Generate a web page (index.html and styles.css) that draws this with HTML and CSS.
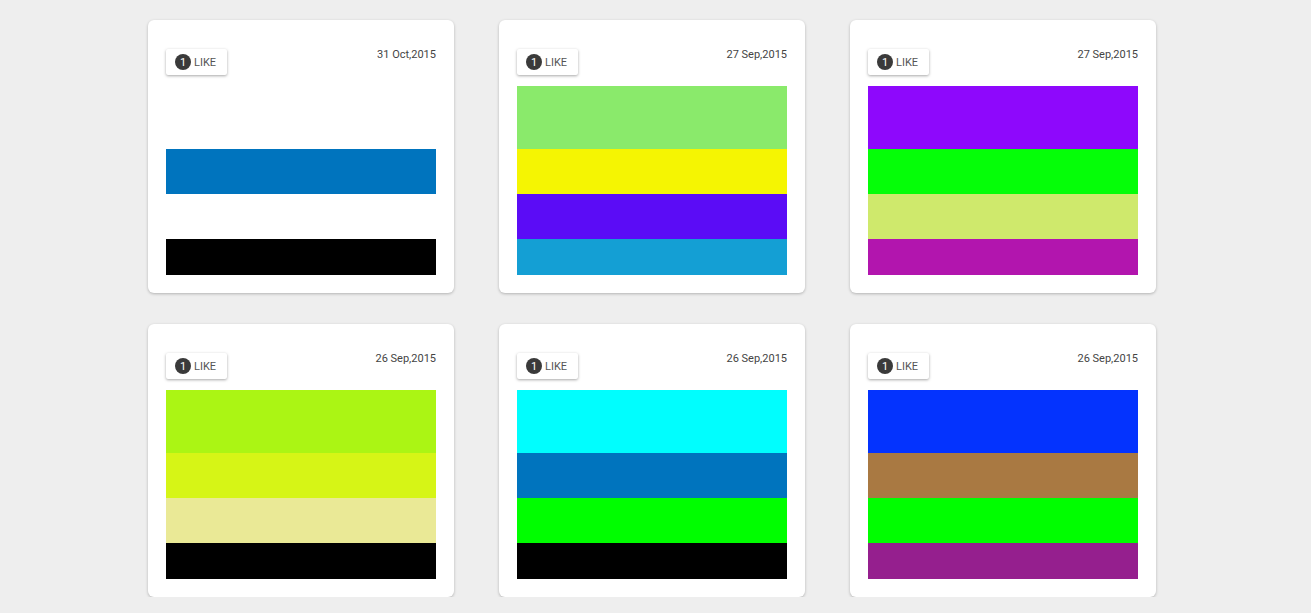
FILE: index.html
```html
<!DOCTYPE html>
<html>
<head>
<meta charset="utf-8">
<link rel="stylesheet" href="styles.css">
</head>
<body>
<div class="grid">
  <div class="card">
    <div class="head"><div class="like"><span class="badge">1</span><span>LIKE</span></div><div class="date">31 Oct,2015</div></div>
    <div class="palette"><div class="s1" style="background:#ffffff"></div><div class="s2" style="background:#0074be"></div><div class="s3" style="background:#ffffff"></div><div class="s4" style="background:#000000"></div></div>
  </div>
  <div class="card">
    <div class="head"><div class="like"><span class="badge">1</span><span>LIKE</span></div><div class="date">27 Sep,2015</div></div>
    <div class="palette"><div class="s1" style="background:#8aea6b"></div><div class="s2" style="background:#f5f502"></div><div class="s3" style="background:#5b0cf6"></div><div class="s4" style="background:#149fd4"></div></div>
  </div>
  <div class="card">
    <div class="head"><div class="like"><span class="badge">1</span><span>LIKE</span></div><div class="date">27 Sep,2015</div></div>
    <div class="palette"><div class="s1" style="background:#8e08fc"></div><div class="s2" style="background:#05fe08"></div><div class="s3" style="background:#cfe96c"></div><div class="s4" style="background:#b215ae"></div></div>
  </div>
  <div class="card">
    <div class="head"><div class="like"><span class="badge">1</span><span>LIKE</span></div><div class="date">26 Sep,2015</div></div>
    <div class="palette"><div class="s1" style="background:#abf514"></div><div class="s2" style="background:#d6f516"></div><div class="s3" style="background:#eae996"></div><div class="s4" style="background:#000000"></div></div>
  </div>
  <div class="card">
    <div class="head"><div class="like"><span class="badge">1</span><span>LIKE</span></div><div class="date">26 Sep,2015</div></div>
    <div class="palette"><div class="s1" style="background:#00fefe"></div><div class="s2" style="background:#0074be"></div><div class="s3" style="background:#00fe00"></div><div class="s4" style="background:#000000"></div></div>
  </div>
  <div class="card">
    <div class="head"><div class="like"><span class="badge">1</span><span>LIKE</span></div><div class="date">26 Sep,2015</div></div>
    <div class="palette"><div class="s1" style="background:#0433fe"></div><div class="s2" style="background:#a97942"></div><div class="s3" style="background:#00fe00"></div><div class="s4" style="background:#951f8e"></div></div>
  </div>
</div>
</body>
</html>
```
FILE: styles.css
```css
html, body {
  margin: 0;
  padding: 0;
  background: #eeeeee;
  font-family: Roboto, "Liberation Sans", sans-serif;
}
.grid {
  display: grid;
  grid-template-columns: repeat(3, 306px);
  column-gap: 45px;
  row-gap: 31px;
  padding: 20px 0 0 148px;
}
.card {
  background: #fff;
  border-radius: 6px;
  box-shadow: 0 1px 3px rgba(0,0,0,0.25);
  padding: 18px;
  height: 273px;
  box-sizing: border-box;
}
.head {
  height: 48px;
  display: flex;
  justify-content: space-between;
  align-items: flex-start;
}
.like {
  margin-top: 11px;
  height: 26px;
  width: 61px;
  box-sizing: border-box;
  display: flex;
  align-items: center;
  padding-left: 9px;
  gap: 3px;
  background: #fff;
  border-radius: 2px;
  box-shadow: 0 1px 3px rgba(0,0,0,0.35);
  font-size: 11px;
  color: #555;
}
.badge {
  width: 16px;
  height: 16px;
  border-radius: 50%;
  background: #3a3a3a;
  color: #fff;
  font-size: 11px;
  display: flex;
  align-items: center;
  justify-content: center;
}
.date {
  margin-top: 10px;
  font-size: 11px;
  color: #444;
}
.palette {
  display: flex;
  flex-direction: column;
}
.s1 { height: 63px; }
.s2 { height: 45px; }
.s3 { height: 45px; }
.s4 { height: 36px; }
```
